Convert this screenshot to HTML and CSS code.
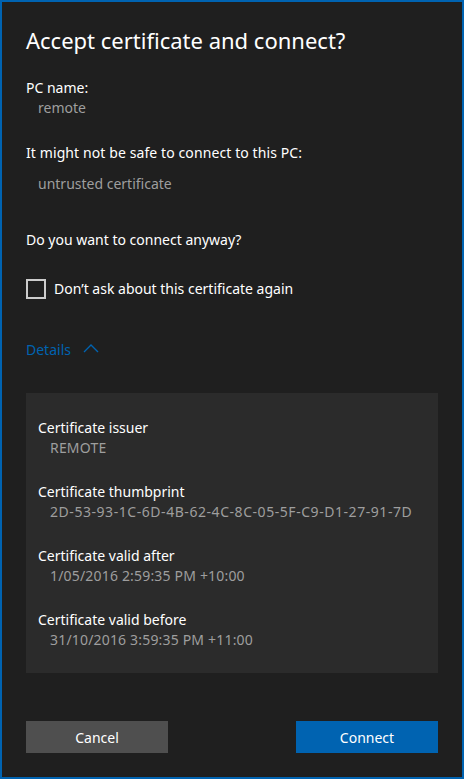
FILE: index.html
```html
<!DOCTYPE html>
<html>
<head>
<meta charset="utf-8">
<link rel="stylesheet" href="styles.css">
</head>
<body>
<div class="dialog">
  <h1 class="title">Accept certificate and connect?</h1>
  <div class="label first">PC name:</div>
  <div class="value">remote</div>
  <div class="label warn">It might not be safe to connect to this PC:</div>
  <div class="value reason">untrusted certificate</div>
  <div class="label ask">Do you want to connect anyway?</div>
  <label class="check">
    <span class="box"></span>
    <span class="check-text">Don’t ask about this certificate again</span>
  </label>
  <div class="details">
    <span>Details</span>
    <svg class="chev" width="16" height="10" viewBox="0 0 16 10"><polyline points="1,9 8,2 15,9" fill="none" stroke="#0063b1" stroke-width="1.4"/></svg>
  </div>
  <div class="panel">
    <div class="item">
      <div class="plabel">Certificate issuer</div>
      <div class="pvalue">REMOTE</div>
    </div>
    <div class="item">
      <div class="plabel">Certificate thumbprint</div>
      <div class="pvalue thumb">2D-53-93-1C-6D-4B-62-4C-8C-05-5F-C9-D1-27-91-7D</div>
    </div>
    <div class="item">
      <div class="plabel">Certificate valid after</div>
      <div class="pvalue">1/05/2016 2:59:35 PM +10:00</div>
    </div>
    <div class="item">
      <div class="plabel">Certificate valid before</div>
      <div class="pvalue">31/10/2016 3:59:35 PM +11:00</div>
    </div>
  </div>
  <div class="buttons">
    <button class="btn cancel">Cancel</button>
    <button class="btn connect">Connect</button>
  </div>
</div>
</body>
</html>
```
FILE: styles.css
```css
html, body {
  margin: 0;
  padding: 0;
  background: #1f1f1f;
}
.dialog {
  box-sizing: border-box;
  width: 464px;
  height: 779px;
  border: 2px solid #0063b1;
  background: #1f1f1f;
  padding: 22px 24px 0 24px;
  font-family: "Noto Sans", "Open Sans", sans-serif;
  font-size: 14px;
  line-height: 20px;
  color: #ffffff;
  display: flex;
  flex-direction: column;
}
.title {
  margin: 0;
  font-size: 22px;
  font-weight: 400;
  line-height: 32px;
  color: #ffffff;
}
.label { color: #ffffff; }
.first { margin-top: 22px; }
.warn { margin-top: 25px; letter-spacing: 0.1px; }
.reason { margin-top: 11px; }
.ask { margin-top: 36px; }
.value {
  color: #9e9e9e;
  padding-left: 12px;
}
.check {
  margin-top: 29px;
  display: flex;
  align-items: center;
  gap: 8px;
  height: 20px;
}
.box {
  box-sizing: border-box;
  width: 20px;
  height: 20px;
  border: 2px solid #cccccc;
}
.details {
  margin-top: 41px;
  display: flex;
  align-items: center;
  gap: 12px;
  color: #0063b1;
  height: 20px;
}
.chev { margin-top: -4px; }
.panel {
  margin-top: 33px;
  background: #2b2b2b;
  height: 280px;
  box-sizing: border-box;
  padding: 25px 12px 23px 12px;
  display: flex;
  flex-direction: column;
  gap: 24px;
}
.plabel { color: #ffffff; }
.pvalue { color: #9e9e9e; padding-left: 12px; letter-spacing: 0.18px; }
.pvalue.thumb { letter-spacing: 0.55px; }
.buttons {
  margin-top: 48px;
  display: flex;
  justify-content: space-between;
}
.btn {
  width: 142px;
  height: 32px;
  border: none;
  color: #ffffff;
  font-family: "Noto Sans", "Open Sans", sans-serif;
  font-size: 14px;
  padding: 0;
}
.cancel { background: #4f4f4f; }
.connect { background: #0063b1; }
```
